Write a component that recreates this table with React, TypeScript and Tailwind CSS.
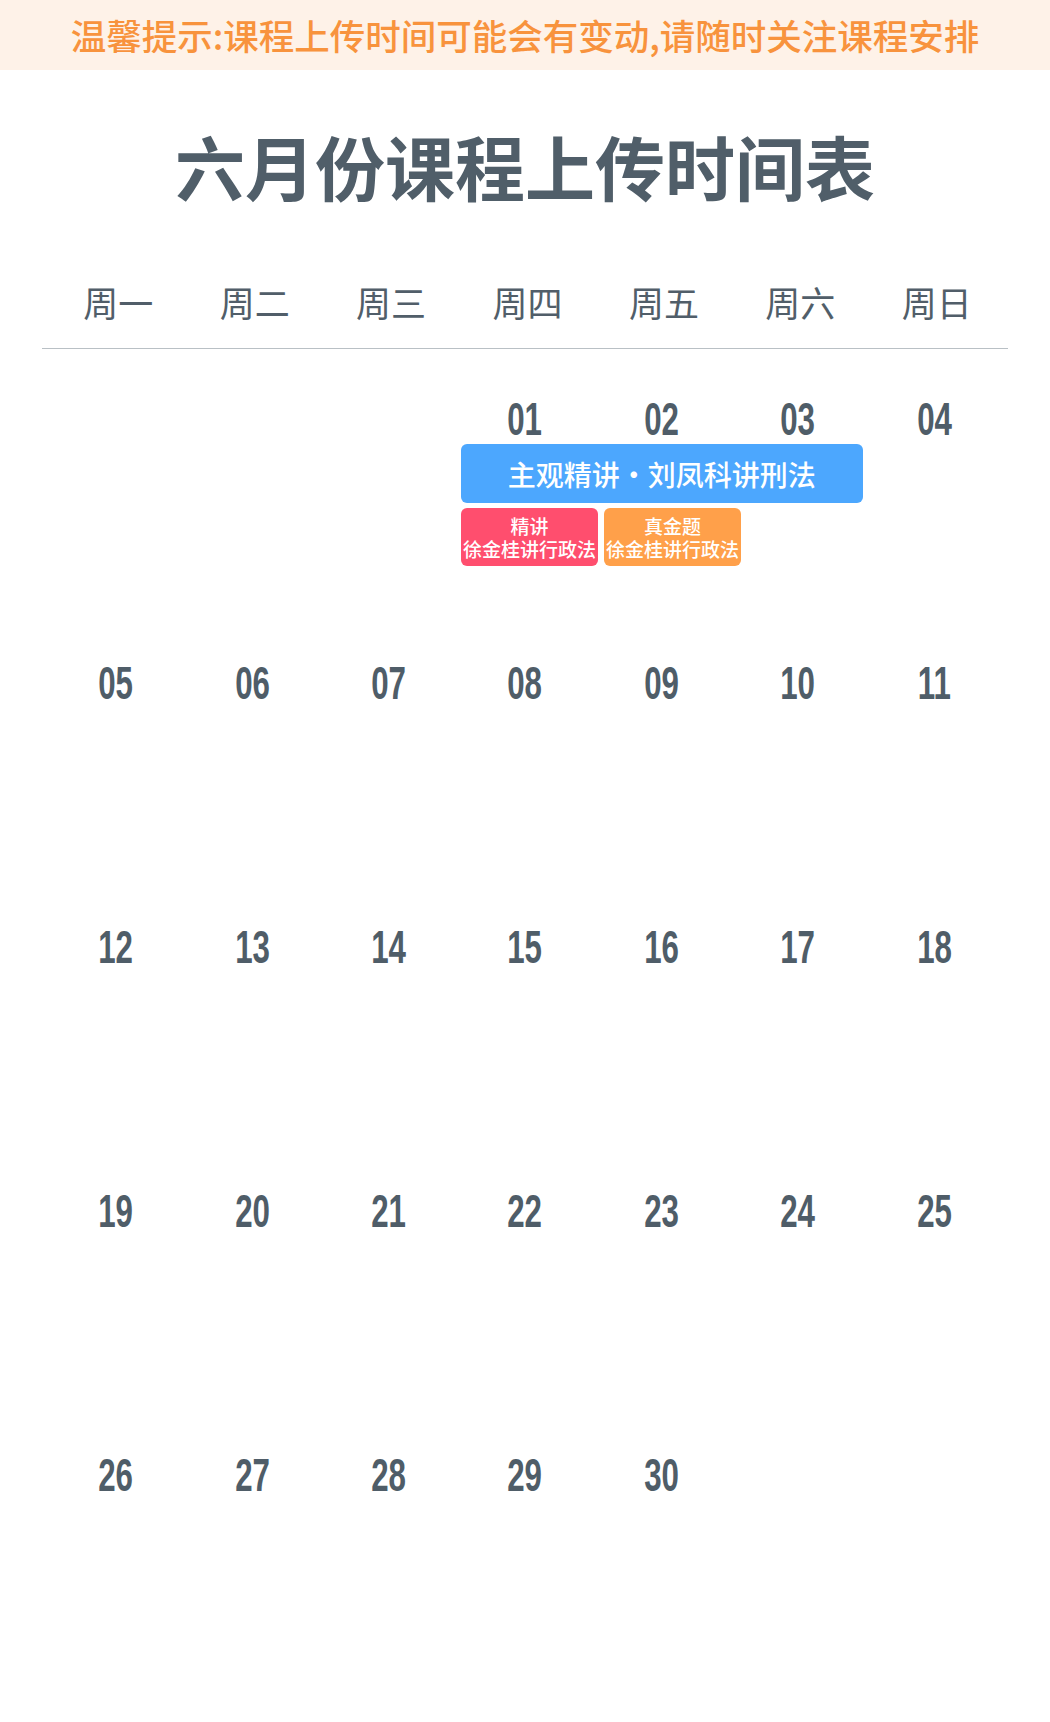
const CJK = "font-['Noto_Sans_CJK_SC','Noto_Sans',sans-serif]";

const WEEKDAYS = ["周一", "周二", "周三", "周四", "周五", "周六", "周日"];

const WEEKS: (string | null)[][] = [
  [null, null, null, "01", "02", "03", "04"],
  ["05", "06", "07", "08", "09", "10", "11"],
  ["12", "13", "14", "15", "16", "17", "18"],
  ["19", "20", "21", "22", "23", "24", "25"],
  ["26", "27", "28", "29", "30", null, null],
];

function DayNumber({ value }: { value: string | null }) {
  return (
    <div className="flex justify-center pt-[47px] pr-[5px]">
      {value && (
        <span className="inline-block scale-x-[0.68] font-['Liberation_Sans',Arial,sans-serif] text-[46px] leading-none font-bold text-[#4f5d68]">
          {value}
        </span>
      )}
    </div>
  );
}

export default function App() {
  return (
    <div className={`w-[1050px] min-h-[1722px] bg-white ${CJK}`}>
      {/* Notice bar */}
      <div className="h-[70px] bg-[#fef2e8] flex items-center justify-center">
        <p className="text-[35.5px] leading-none font-medium text-[#f8933d]">
          温馨提示:课程上传时间可能会有变动,请随时关注课程安排
        </p>
      </div>

      {/* Title */}
      <div className="h-[202px] pb-[11px] flex items-center justify-center">
        <h1 className="text-[70px] leading-none font-bold text-[#505e69]">六月份课程上传时间表</h1>
      </div>

      <div className="mx-[42px]">
        {/* Weekday header */}
        <div className="h-[76px] pb-[17px] ml-[8px] w-[955px] grid grid-cols-7 items-center">
          {WEEKDAYS.map((d) => (
            <div key={d} className="text-center text-[35px] leading-none text-[#515e69]">
              {d}
            </div>
          ))}
        </div>
        <div className="h-px bg-[#b9c0c5]" />

        {/* Calendar weeks */}
        <div className="ml-[8px] w-[955px]">
          {WEEKS.map((week, wi) => (
            <div key={wi} className="h-[264px] grid grid-cols-7 content-start">
              {week.map((day, di) => (
                <DayNumber key={di} value={day} />
              ))}
              {wi === 0 && (
                <div className="col-start-4 col-span-4 pl-[1.5px] pt-[2px] flex flex-col gap-[5px]">
                  <div className="w-[402px] h-[59px] rounded-[6px] bg-[#4ca7fe] flex items-center justify-center text-white text-[28px] leading-none font-medium">
                    主观精讲·刘凤科讲刑法
                  </div>
                  <div className="flex gap-[5.5px]">
                    <div className="w-[137.5px] h-[58px] rounded-[6px] bg-[#ff4e6e] flex items-center justify-center text-center text-white text-[19px] leading-[23px] font-medium">
                      <p>
                        精讲
                        <br />
                        徐金桂讲行政法
                      </p>
                    </div>
                    <div className="w-[137.5px] h-[58px] rounded-[6px] bg-[#ffa04a] flex items-center justify-center text-center text-white text-[19px] leading-[23px] font-medium">
                      <p>
                        真金题
                        <br />
                        徐金桂讲行政法
                      </p>
                    </div>
                  </div>
                </div>
              )}
            </div>
          ))}
        </div>
      </div>
    </div>
  );
}
